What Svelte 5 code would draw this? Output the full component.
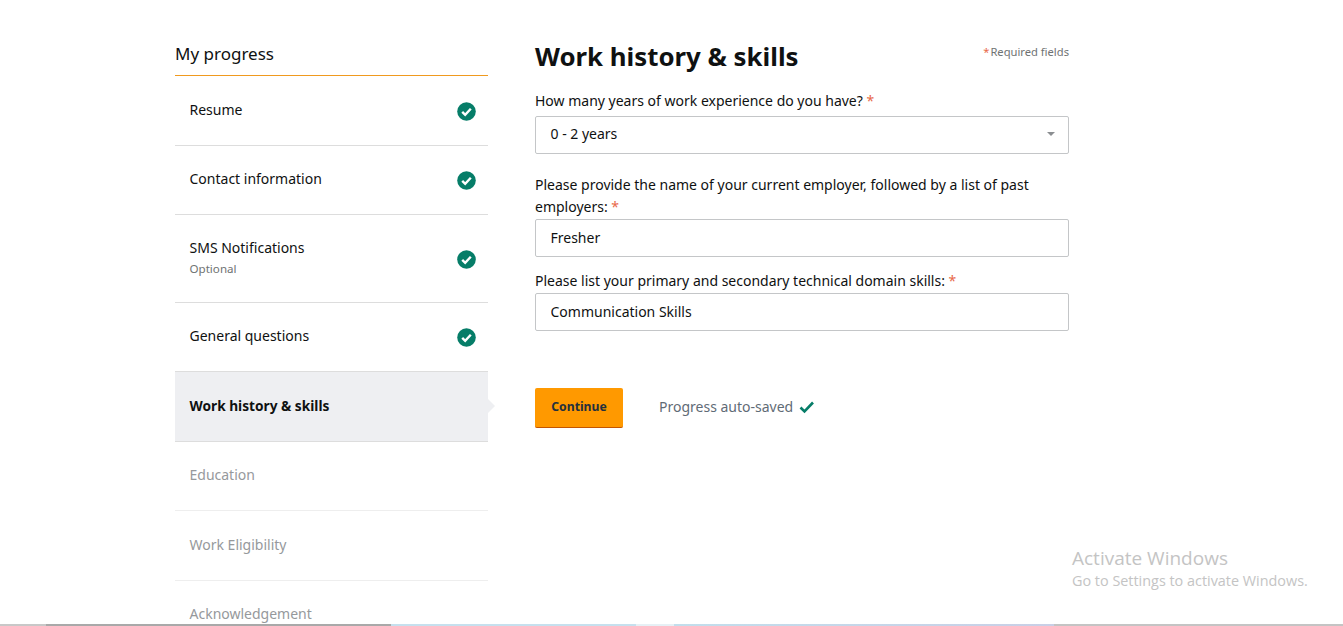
<script>
	const steps = [
		{ name: "Resume", state: "done" },
		{ name: "Contact information", state: "done" },
		{ name: "SMS Notifications", note: "Optional", state: "done" },
		{ name: "General questions", state: "done" },
		{ name: "Work history & skills", state: "active" },
		{ name: "Education", state: "todo" },
		{ name: "Work Eligibility", state: "todo" },
		{ name: "Acknowledgement", state: "todo" }
	];
</script>

<div class="page">
	<div class="layout">
		<aside class="sidebar">
			<h2>My progress</h2>
			<ul>
				{#each steps as step}
					<li class={step.state} class:tall={step.note}>
						<div class="step-text">
							<div class="step-name">{step.name}</div>
							{#if step.note}<div class="step-note">{step.note}</div>{/if}
						</div>
						{#if step.state === "done"}
							<svg class="check" width="19" height="19" viewBox="0 0 19 19">
								<circle cx="9.5" cy="9.5" r="9.3" fill="#067d68" />
								<path d="M5.2 9.8l3 3 5.6-6" fill="none" stroke="#fff" stroke-width="2.4" />
							</svg>
						{/if}
					</li>
				{/each}
			</ul>
		</aside>

		<main>
			<div class="head">
				<h1>Work history &amp; skills</h1>
				<span class="required"><b>*</b>Required fields</span>
			</div>

			<label for="years">How many years of work experience do you have? <b>*</b></label>
			<div class="box select" id="years">
				<span>0 - 2 years</span>
				<i class="caret"></i>
			</div>

			<label class="second" for="employer">Please provide the name of your current employer, followed by a list of past employers: <b>*</b></label>
			<input class="box" id="employer" value="Fresher" />

			<label class="third" for="domain">Please list your primary and secondary technical domain skills: <b>*</b></label>
			<input class="box" id="domain" value="Communication Skills" />

			<div class="actions">
				<button>Continue</button>
				<span class="saved">Progress auto-saved</span>
				<svg width="16" height="13" viewBox="0 0 16 13">
					<path d="M1.5 6.5l4 4 8.5-9" fill="none" stroke="#067d68" stroke-width="2.6" />
				</svg>
			</div>
		</main>
	</div>

	<div class="activate">
		<div class="a1">Activate Windows</div>
		<div class="a2">Go to Settings to activate Windows.</div>
	</div>

	<div class="strip">
		<span class="s1"></span>
		<span class="s2"></span>
		<span class="s3"></span>
		<span class="s4"></span>
		<span class="s5"></span>
		<span class="s6"></span>
	</div>
</div>

<style>
	:global(body) {
		margin: 0;
		background: #fff;
	}

	.page {
		position: relative;
		height: 626px;
		overflow: hidden;
		font-family: "Noto Sans", Roboto, sans-serif;
		font-size: 14px;
		line-height: 20px;
		color: #0f1111;
	}

	.layout {
		display: flex;
		gap: 47px;
		padding: 41px 0 0 175px;
	}

	/* sidebar */
	.sidebar {
		width: 313px;
		flex: none;
	}

	h2 {
		margin: 0;
		padding: 0 0 9px;
		height: 25px;
		line-height: 25px;
		font-size: 17px;
		font-weight: 400;
		border-bottom: 1px solid #f09a1f;
	}

	ul {
		margin: 0;
		padding: 0;
		list-style: none;
	}

	li {
		display: flex;
		align-items: center;
		justify-content: space-between;
		height: 69px;
		padding: 0 12.5px 0 14.5px;
		border-bottom: 1px solid #ddd;
		box-sizing: border-box;
	}

	li:first-child { height: 70px; }
	li.tall { height: 88px; }

	li.done .step-text { margin-bottom: 2px; }
	li.done .check { margin-top: 1px; }

	li.active {
		position: relative;
		background: #eeeff2;
		font-weight: 700;
		font-size: 13.7px;
		border-top: 1px solid #ddd;
		margin-top: -1px;
		box-sizing: content-box;
		height: 68.5px;
	}

	li.active::after {
		content: "";
		position: absolute;
		left: 100%;
		top: 27px;
		border: 7px solid transparent;
		border-left-color: #eeeff2;
	}

	li.todo {
		height: 69.7px;
		color: #96999c;
		border-bottom-color: #eee;
	}

	li.todo .step-text { margin-bottom: 2px; }

	.step-note {
		font-size: 11.6px;
		line-height: 18px;
		margin-top: 2px;
		color: #6f7373;
	}

	.check {
		flex: none;
	}

	/* form */
	main {
		width: 534px;
		flex: none;
	}

	.head {
		display: flex;
		justify-content: space-between;
		align-items: flex-start;
		height: 51px;
		margin-top: -1px;
	}

	h1 {
		margin: 0;
		font-size: 25.8px;
		line-height: 32px;
		font-weight: 700;
	}

	.required {
		font-size: 11.2px;
		line-height: 20px;
		margin-top: 2px;
		color: #6f7373;
	}

	.required b {
		margin-right: 1px;
	}

	b {
		color: #e8694a;
		font-weight: 400;
	}

	label {
		display: block;
		line-height: 22px;
		margin-top: -1px;
		margin-bottom: 4px;
	}

	label.second {
		margin-top: 20px;
		margin-bottom: 1px;
	}

	label.third {
		margin-top: 13px;
		margin-bottom: 1px;
	}

	.box {
		display: flex;
		align-items: center;
		justify-content: space-between;
		width: 100%;
		height: 38px;
		box-sizing: border-box;
		padding: 0 14.5px 2px;
		border: 1px solid #c4c6c8;
		border-radius: 2px;
		background: #fff;
		font: inherit;
		color: inherit;
		margin: 0;
	}

	.caret {
		width: 0;
		height: 0;
		margin-right: -1px;
		border: 4px solid transparent;
		border-top: 4px solid #8b8e91;
		border-bottom: 0;
	}

	.actions {
		display: flex;
		align-items: center;
		margin-top: 57px;
	}

	.actions svg {
		margin-bottom: 2px;
	}

	button {
		width: 88px;
		height: 40px;
		padding: 0 0 2px;
		border: 0;
		border-bottom: 1px solid #c45500;
		border-radius: 2px;
		background: #ff9900;
		color: #232f3e;
		font: inherit;
		font-size: 12.2px;
		font-weight: 700;
		margin-right: 36px;
	}

	.saved {
		color: #5f6b76;
		margin-right: 6px;
		margin-bottom: 2px;
	}

	/* Windows watermark over the page */
	.activate {
		position: absolute;
		left: 1072px;
		top: 546px;
		font-family: "Open Sans", sans-serif;
		color: #c4c4c4;
	}

	.a1 {
		font-size: 19px;
		line-height: 25px;
	}

	.a2 {
		font-size: 14.4px;
		line-height: 20px;
	}

	/* thin capture artefact along the bottom edge */
	.strip {
		position: absolute;
		left: 0;
		right: 0;
		bottom: 0;
		height: 2px;
		display: flex;
	}

	.s1 { width: 46px; background: #c8c8c8; }
	.s2 { width: 345px; background: #a9a9a9; }
	.s3 { width: 245px; background: #c6e0ee; }
	.s4 { width: 38px; background: #e6f0f5; }
	.s5 { width: 380px; background: linear-gradient(90deg, #c2deec, #c9cfe6); }
	.s6 { flex: 1; background: #c4c4c4; }
</style>
